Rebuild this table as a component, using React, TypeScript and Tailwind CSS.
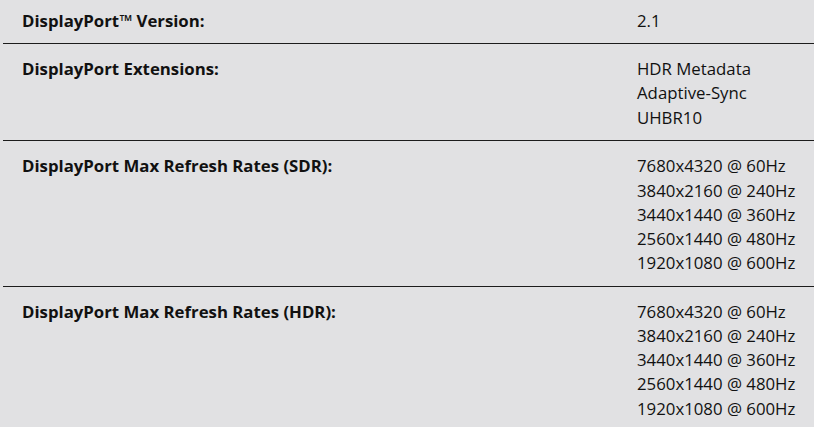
const rows = [
  { label: 'DisplayPort™ Version:', values: ['2.1'], first: true },
  { label: 'DisplayPort Extensions:', values: ['HDR Metadata', 'Adaptive-Sync', 'UHBR10'] },
  {
    label: 'DisplayPort Max Refresh Rates (SDR):',
    values: ['7680x4320 @ 60Hz', '3840x2160 @ 240Hz', '3440x1440 @ 360Hz', '2560x1440 @ 480Hz', '1920x1080 @ 600Hz'],
  },
  {
    label: 'DisplayPort Max Refresh Rates (HDR):',
    values: ['7680x4320 @ 60Hz', '3840x2160 @ 240Hz', '3440x1440 @ 360Hz', '2560x1440 @ 480Hz', '1920x1080 @ 600Hz'],
  },
]

export default function App() {
  return (
    <div className="w-[814px] h-[427px] overflow-hidden bg-[#e1e1e3] font-['Open_Sans',sans-serif] text-[16.8px] leading-[24.2px] text-[#111]">
      <div className="ml-[3px]">
        {rows.map((row, i) => (
          <div
            key={i}
            className={`flex pl-[19px] pb-[10.5px] ${row.first ? 'pt-[8.5px]' : 'pt-[13px]'} ${i < rows.length - 1 ? 'border-b border-[#1c1c1c]' : ''}`}
          >
            <div className="w-[615px] font-bold">{row.label}</div>
            <div className="flex flex-col">
              {row.values.map((v) => (
                <span key={v}>{v}</span>
              ))}
            </div>
          </div>
        ))}
      </div>
    </div>
  )
}
